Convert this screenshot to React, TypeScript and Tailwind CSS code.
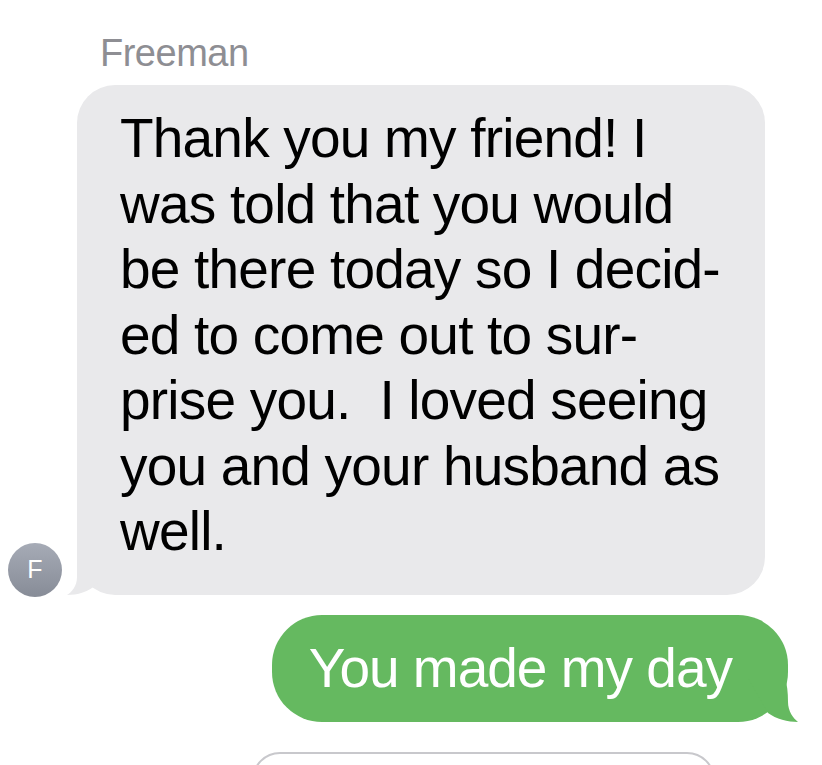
import React from 'react';

const lines = [
    'Thank you my friend! I',
    'was told that you would',
    'be there today so I decid-',
    'ed to come out to sur-',
    'prise you.  I loved seeing',
    'you and your husband as',
    'well.',
];

export default function App() {
    return (
        <div className="w-full h-[765px] overflow-hidden bg-white font-['Liberation_Sans',Arial,sans-serif]">
            <div className="pt-[30px] pl-[100px] text-[38px] leading-[47px] tracking-[-0.5px] text-[#8e8e93]">Freeman</div>

            {/* incoming */}
            <div className="mt-[8px] flex items-end">
                <div className="ml-[8px] mb-[-2px] w-[54px] h-[54px] rounded-full bg-gradient-to-b from-[#a6abb6] to-[#878c97] flex items-center justify-center text-white text-[25px] leading-none">
                    F
                </div>
                <div className="relative ml-[15px] w-[688px] rounded-[38px] bg-[#e9e9eb] pl-[43px] pr-[20px] pt-[21px] pb-[30px]">
                    <svg className="absolute left-[-12px] bottom-0" width="60" height="40" viewBox="0 0 60 40">
                        <path d="M12 0 L12 22 C12 31 7 37 2 40 C12 40 24 37 32 29 L50 0 Z" fill="#e9e9eb" />
                    </svg>
                    <p className="relative text-[55px] leading-[65.5px] tracking-[-0.8px] text-black whitespace-pre">
                        {lines.map((l, i) => (
                            <span key={i} className="block">{l}</span>
                        ))}
                    </p>
                </div>
            </div>

            {/* outgoing */}
            <div className="mt-[20px] flex justify-end pr-[34px]">
                <div className="relative rounded-[50px] bg-[#65b960] pl-[37px] pr-[56px] pt-[21px] pb-[21px]">
                    <svg className="absolute right-[-12px] bottom-0" width="60" height="44" viewBox="0 0 60 44">
                        <path d="M45 0 C47 6 48 14 48 24 C48 33 53 40 58 44 C48 44 36 41 28 35 L8 0 Z" fill="#65b960" />
                    </svg>
                    <p className="relative text-[55px] leading-[65px] tracking-[-1px] text-white whitespace-pre">You made my day</p>
                </div>
            </div>

            {/* input field */}
            <div className="mt-[30px] ml-[252px] w-[463px] h-[60px] rounded-[28px] border-2 border-[#c8c8cc]" />
        </div>
    );
}
